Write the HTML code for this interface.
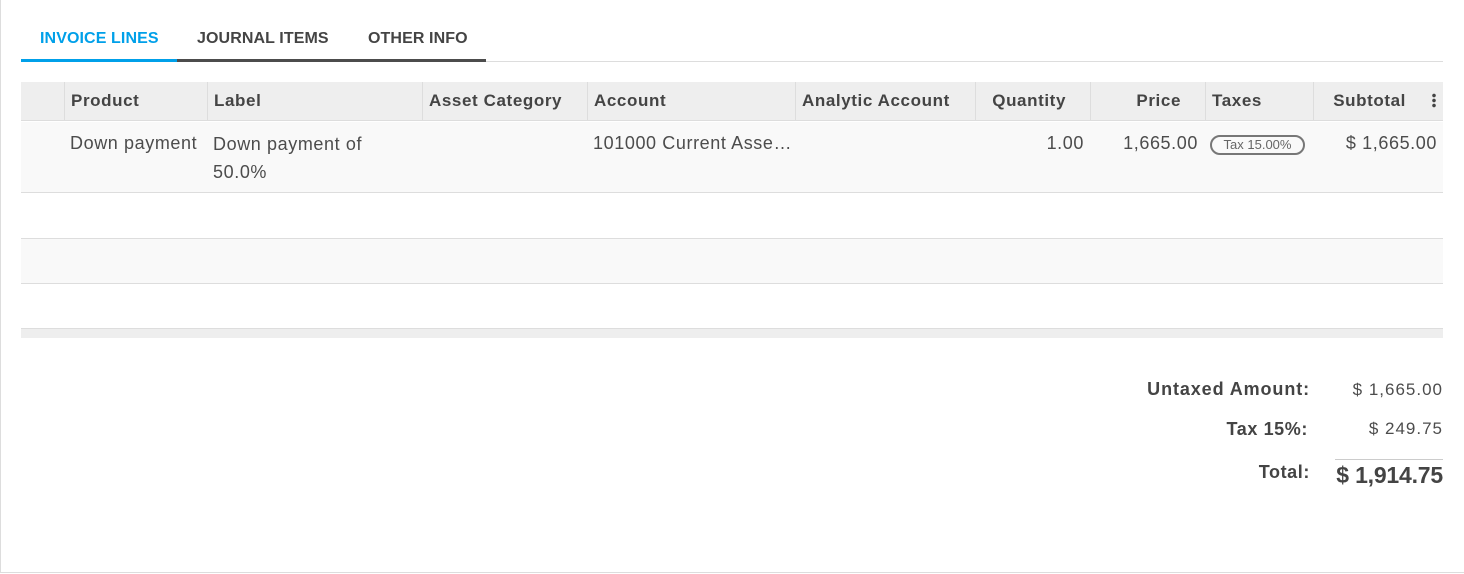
<!DOCTYPE html>
<html><head><style>
*{margin:0;padding:0;box-sizing:border-box}
body{width:1464px;height:574px;background:#fff;font-family:"Liberation Sans",sans-serif;color:#4c4c4c;position:relative;overflow:hidden}
.frame{position:absolute;left:0;top:0;width:1464px;height:573px;border-left:1px solid #ddd;border-bottom:1px solid #ddd}
.a{position:absolute;white-space:nowrap}
.tab{font-size:16px;font-weight:bold;top:30px;letter-spacing:0.1px}
.hdr{position:absolute;left:21px;top:82px;width:1422px;height:39px;background:#eee;border-bottom:1px solid #ddd}
.vd{position:absolute;top:82px;height:39px;width:1px;background:#ddd}
.h{font-size:17px;font-weight:bold;top:91px;color:#444;letter-spacing:0.6px}
.c{font-size:18px;top:133px;letter-spacing:0.6px}
</style></head><body>
<div class="frame"></div>
<div class="a tab" style="left:40px;color:#00a0e9">INVOICE LINES</div>
<div class="a tab" style="left:197px;color:#444">JOURNAL ITEMS</div>
<div class="a tab" style="left:368px;color:#444">OTHER INFO</div>
<div class="a" style="left:21px;top:61px;width:1422px;height:1px;background:#ddd"></div>
<div class="a" style="left:21px;top:59px;width:156px;height:3px;background:#00a0e9"></div>
<div class="a" style="left:177px;top:59px;width:309px;height:3px;background:#4c4c4c"></div>

<div class="hdr"></div>
<div class="vd" style="left:64px"></div><div class="vd" style="left:207px"></div><div class="vd" style="left:422px"></div><div class="vd" style="left:587px"></div><div class="vd" style="left:795px"></div><div class="vd" style="left:975px"></div><div class="vd" style="left:1090px"></div><div class="vd" style="left:1205px"></div><div class="vd" style="left:1313px"></div>
<div class="a h" style="left:71px">Product</div>
<div class="a h" style="left:214px">Label</div>
<div class="a h" style="left:429px">Asset Category</div>
<div class="a h" style="left:594px">Account</div>
<div class="a h" style="left:802px">Analytic Account</div>
<div class="a h" style="right:398px">Quantity</div>
<div class="a h" style="right:283px">Price</div>
<div class="a h" style="left:1212px">Taxes</div>
<div class="a h" style="right:58px">Subtotal</div>
<div class="a" style="left:1432px;top:93px;width:4px;height:15px;background:radial-gradient(circle,#444 1.6px,transparent 2px) 0 0/4px 5px"></div>

<div class="a" style="left:21px;top:122px;width:1422px;height:71px;background:#f9f9f9;border-bottom:1px solid #ddd"></div>
<div class="a c" style="left:70px">Down payment</div>
<div class="a c" style="left:213px;line-height:28px;top:130px">Down payment of<br>50.0%</div>
<div class="a c" style="left:593px">101000 Current Asse…</div>
<div class="a c" style="right:380px">1.00</div>
<div class="a c" style="right:266px">1,665.00</div>
<div class="a" style="left:1210px;top:135px;width:95px;height:20px;border:2px solid #777;border-radius:10px;font-size:13px;text-align:center;line-height:16px;color:#666">Tax 15.00%</div>
<div class="a c" style="right:27px">$ 1,665.00</div>

<div class="a" style="left:21px;top:238px;width:1422px;height:46px;background:#f9f9f9;border-top:1px solid #ddd;border-bottom:1px solid #ddd"></div>
<div class="a" style="left:21px;top:328px;width:1422px;height:10px;background:#eee;border-top:1px solid #ddd"></div>

<div class="a" style="right:154px;top:379px;font-size:18px;font-weight:bold;color:#444;letter-spacing:0.9px">Untaxed Amount:</div>
<div class="a" style="right:21px;top:380px;font-size:17px;letter-spacing:1px">$ 1,665.00</div>
<div class="a" style="right:156px;top:419px;font-size:18px;font-weight:bold;color:#444;letter-spacing:0.6px">Tax 15%:</div>
<div class="a" style="right:21px;top:419px;font-size:17px;letter-spacing:1px">$ 249.75</div>
<div class="a" style="left:1335px;top:459px;width:108px;height:1px;background:#ccc"></div>
<div class="a" style="right:154px;top:462px;font-size:18px;font-weight:bold;color:#444;letter-spacing:0.6px">Total:</div>
<div class="a" style="right:21px;top:462px;font-size:23px;font-weight:bold;color:#444;letter-spacing:-0.2px">$ 1,914.75</div>
</body></html>
